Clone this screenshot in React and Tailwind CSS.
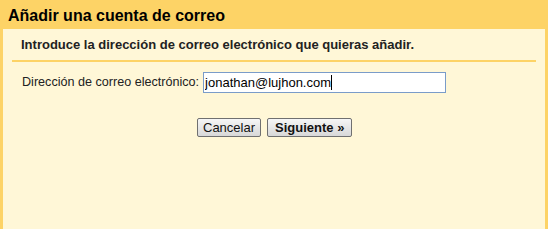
import React from "react";

export default function App() {
  return (
    <div
      className="w-[548px] h-[229px] bg-[#fdd366] flex flex-col px-[3px] overflow-hidden"
      style={{ fontFamily: '"Liberation Sans", Arial, sans-serif' }}
    >
      <div className="h-[29px] flex items-center pl-[5px] pt-[2px]">
        <h1 className="text-[16px] font-bold text-black leading-none">Añadir una cuenta de correo</h1>
      </div>
      <div className="flex-1 bg-[#fff7d7] flex flex-col">
        <div className="mx-[9px] border-b-2 border-[#fdd366] h-[33px] flex items-center pl-[9px] pt-[1px]">
          <p className="text-[13px] font-bold text-[#222]">Introduce la dirección de correo electrónico que quieras añadir.</p>
        </div>
        <div className="flex items-center mt-[10px] pl-[19px] h-[21px]">
          <label className="text-[12.6px] text-[#222] mr-[4px] leading-none">Dirección de correo electrónico:</label>
          <div className="relative flex">
            <input
              className="block w-[243px] h-[21px] border border-[#7a9cc9] bg-white px-[1px] text-[13px] text-black outline-none"
              defaultValue="jonathan@lujhon.com"
              style={{ fontFamily: '"Liberation Sans", Arial, sans-serif' }}
            />
            <span className="absolute left-[128px] top-[3px] w-px h-[15px] bg-black" />
          </div>
        </div>
        <div className="flex mt-[25px] pl-[194px] gap-[6px]">
          <button className="h-[19px] px-[5px] border border-[#707070] rounded-[2px] bg-gradient-to-b from-[#f6f6f6] to-[#d8d8d8] text-[13px] text-[#111] leading-none">
            Cancelar
          </button>
          <button className="h-[19px] px-[7px] border border-[#707070] rounded-[2px] bg-gradient-to-b from-[#f6f6f6] to-[#d8d8d8] text-[13px] font-bold text-[#111] leading-none">
            Siguiente »
          </button>
        </div>
      </div>
    </div>
  );
}
